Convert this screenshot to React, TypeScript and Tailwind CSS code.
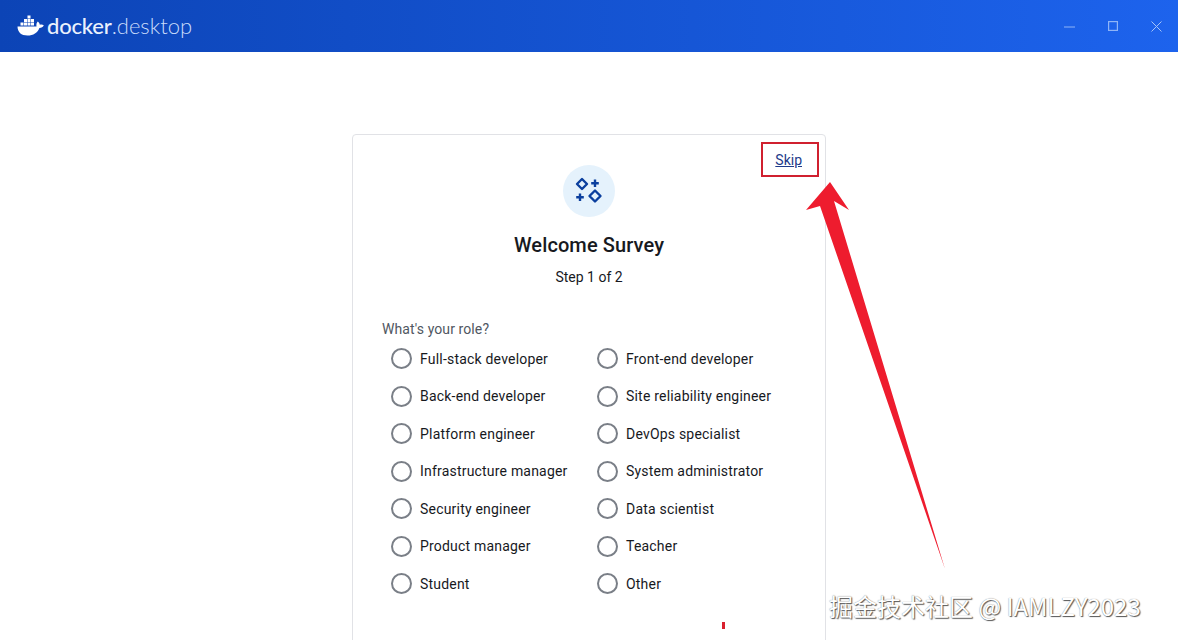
const roles = [
  "Full-stack developer",
  "Front-end developer",
  "Back-end developer",
  "Site reliability engineer",
  "Platform engineer",
  "DevOps specialist",
  "Infrastructure manager",
  "System administrator",
  "Security engineer",
  "Data scientist",
  "Product manager",
  "Teacher",
  "Student",
  "Other",
];

function DockerLogo() {
  return (
    <svg width="28" height="24" viewBox="0 0 28 24" fill="white">
      <rect x="3.5" y="8.5" width="3" height="3" />
      <rect x="7" y="8.5" width="3" height="3" />
      <rect x="10.5" y="8.5" width="3" height="3" />
      <rect x="14" y="8.5" width="3" height="3" />
      <rect x="7" y="5" width="3" height="3" />
      <rect x="10.5" y="5" width="3" height="3" />
      <rect x="14" y="5" width="3" height="3" />
      <rect x="10.5" y="1.5" width="3" height="3" />
      <path d="M0.5 12.5H19.5C19.2 10.5 19.6 8.6 20.8 7.6C22 8.5 22.6 9.6 22.8 10.7C24.2 10.2 25.6 10.4 26.8 11.2C26 13 24.4 13.9 22.4 13.9C20.6 18.6 16.4 21.5 10.5 21.5C4.2 21.5 0.6 18.2 0.5 12.5Z" />
    </svg>
  );
}

function WindowControls() {
  return (
    <div className="flex items-center gap-[33px] pr-4">
      <svg width="11" height="11" viewBox="0 0 11 11" stroke="#8fb4f7" fill="none">
        <path d="M0 6H11" />
      </svg>
      <svg width="10" height="10" viewBox="0 0 10 10" stroke="#8fb4f7" fill="none" strokeWidth="1.2">
        <rect x="0.6" y="0.6" width="8.8" height="8.8" />
      </svg>
      <svg width="11" height="11" viewBox="0 0 11 11" stroke="#a5c3f8" fill="none">
        <path d="M0.5 0.5L10.5 10.5M10.5 0.5L0.5 10.5" />
      </svg>
    </div>
  );
}

function SparklesIcon() {
  return (
    <svg width="30" height="30" viewBox="0 0 30 30" fill="none" stroke="#0b3f9e">
      <path d="M8 3L13 8L8 13L3 8Z" strokeWidth="2.4" strokeLinejoin="round" />
      <path d="M20 15.5L25.5 21L20 26.5L14.5 21Z" strokeWidth="2.4" strokeLinejoin="round" transform="translate(1 -1)" />
      <path d="M21 3.5V11M17.2 7.2H24.8" strokeWidth="2.4" />
      <path d="M5 17.5V25M1.2 21.2H8.8" strokeWidth="2.4" transform="translate(1 0)" />
    </svg>
  );
}

function Annotation() {
  return (
    <svg className="absolute left-[800px] top-[180px]" width="150" height="392" viewBox="0 0 150 392">
      <path d="M30 2L6 30L20 26L145 389L34 21L49 30Z" fill="#ee1c2e" />
    </svg>
  );
}

export default function App() {
  return (
    <div className="relative h-[640px] w-[1178px] overflow-hidden bg-white font-['Roboto',sans-serif]">
      <header className="flex h-[52px] items-center justify-between bg-gradient-to-r from-[#0c44b6] to-[#1d63ed]">
        <div className="flex items-center pl-[17px] text-[22px] leading-none text-[#eaf1fd]">
          <DockerLogo />
          <span className="ml-[2px] font-['Lato',sans-serif] font-medium tracking-[-0.2px]">docker</span>
          <span className="font-['Lato',sans-serif] font-light text-[#c9dbfa]">.desktop</span>
        </div>
        <WindowControls />
      </header>

      <main className="flex justify-center pt-[82px]">
        <section className="relative h-[600px] w-[474px] rounded-t-[4px] border border-[#e1e2e6] px-[29px] pt-[30px]">
          <a className="absolute right-[23px] top-[17px] text-[14px] leading-[16px] text-[#1e3a8a] underline">Skip</a>
          <div className="flex flex-col items-center">
            <div className="flex h-[52px] w-[52px] items-center justify-center rounded-full bg-[#e5f2fc]">
              <SparklesIcon />
            </div>
            <h1 className="mt-[16px] text-[20px] font-medium leading-[24px] tracking-[0.1px] text-[#17191e]">Welcome Survey</h1>
            <p className="mt-[10px] text-[14px] leading-[20px] text-[#17191e]">Step 1 of 2</p>
          </div>
          <p className="mt-[32px] text-[14px] leading-[20px] tracking-[0.1px] text-[#505762]">What's your role?</p>
          <div className="mt-[1px] grid grid-cols-[206px_1fr] pl-[9px]">
            {roles.map((role) => (
              <label key={role} className="flex h-[37.5px] items-center gap-[8px]">
                <span className="h-[21px] w-[21px] rounded-full border-2 border-[#7a7f87]" />
                <span className="text-[14px] leading-[20px] tracking-[0.2px] text-[#17191e]">{role}</span>
              </label>
            ))}
          </div>
        </section>
      </main>

      {/* screenshot annotations */}
      <div className="absolute left-[761px] top-[142px] h-[35px] w-[58px] border-2 border-[#d0202f]" />
      <div className="absolute left-[722px] top-[622px] h-[7px] w-[3px] bg-[#d9202e]" />
      <Annotation />
      <div className="absolute left-[829px] top-[590px] font-['Noto_Sans_CJK_SC',sans-serif] text-[24px] leading-[32px] text-white [text-shadow:1px_1px_1px_#555,0_0_1px_#777]">
        掘金技术社区 @ IAMLZY2023
      </div>
    </div>
  );
}
